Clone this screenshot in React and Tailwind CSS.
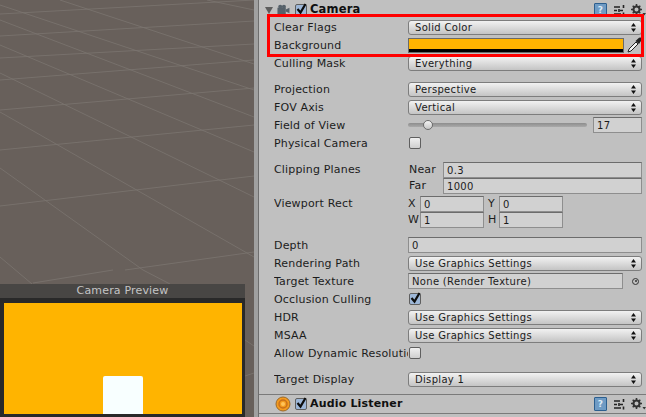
import React from "react";

const gridLines = [
  [0, 36, 254, 21], [0, 14, 254, 0], [0, 58, 254, 44], [0, 80, 254, 60], [0, 110, 254, 88], [0, 150, 254, 125], [0, 206, 254, 176],
  [125, 270, 254, 252], [33, 283, 113, 270], [245, 376, 254, 373],
  [0, 168, 143, 270], [143, 270, 170, 284], [0, 112, 254, 257], [0, 73, 254, 197], [0, 45, 254, 152], [0, 20, 254, 117],
  [0, 5, 254, 90], [60, 0, 254, 64], [207, 0, 254, 10], [0, 257, 32, 284], [245, 340, 254, 346],
];

const Label = ({ children, className = "pt-[2px]" }) => (
  <span className={`w-[134px] shrink-0 overflow-hidden whitespace-nowrap ${className}`}>{children}</span>
);

const Row = ({ label, children, className = "" }) => (
  <div className={`flex h-[18px] items-center ${className}`}>
    <Label>{label}</Label>
    {children}
  </div>
);

const Arrows = () => (
  <svg width="5" height="9" viewBox="0 0 5 9" className="shrink-0">
    <path d="M2.5 0L5 3.4H0zM2.5 9L0 5.6H5z" fill="#111" />
  </svg>
);

const Dropdown = ({ value }) => (
  <div className="flex h-[15px] w-[234px] items-center justify-between rounded-[3px] border border-[#7d7d7d] bg-gradient-to-b from-[#f2f2f2] to-[#c4c4c4] pl-[6px] pr-[5px] text-[#1a1a1a]">
    <span className="text-[10px] tracking-[0.32px]">{value}</span>
    <Arrows />
  </div>
);

const Field = ({ value, className = "" }) => (
  <div className={`flex h-[16px] items-center border border-[#8e8e8e] border-t-[#6c6c6c] bg-[#d1d1d1] pl-[3px] text-[10px] tracking-[0.32px] ${className}`}>
    {value}
  </div>
);

const Check = ({ checked }) => (
  <div className={`relative size-[12px] rounded-[2px] border border-[#5f5f5f] ${checked ? "bg-[#9db7d8]" : "bg-gradient-to-b from-[#f0f0f0] to-[#cfcfcf]"}`}>
    {checked && (
      <svg width="13" height="13" viewBox="0 0 13 13" className="absolute left-[-1px] top-[-3px]">
        <path d="M2.5 7L5.5 10.5L10.5 2" fill="none" stroke="#0c0c0c" strokeWidth="2.2" />
      </svg>
    )}
  </div>
);

const HeaderIcons = () => (
  <div className="ml-auto flex items-center">
    <div className="flex h-[14px] w-[13px] items-center justify-center rounded-[1px] border border-[#2c5f8f] bg-[#6f9bc4] text-[9px] font-bold leading-none text-[#dcebf6]">
      ?
    </div>
    <svg width="11" height="11" viewBox="0 0 11 11" className="ml-[7px]">
      <path d="M0 2H6M0 5.5H3M6 5.5H9M0 9H7" stroke="#222" strokeWidth="1.4" />
      <path d="M9.5 0V3M5 4V7M9.5 7.5V10.5" stroke="#222" strokeWidth="1.6" />
    </svg>
    <svg width="15" height="12" viewBox="0 0 15 12" className="ml-[6px]">
      <circle cx="5.5" cy="5.5" r="3" fill="none" stroke="#333" strokeWidth="2" />
      <path d="M5.5 0V2M5.5 9V11M0 5.5H2M9 5.5H11M1.7 1.7L3 3M8 8L9.3 9.3M1.7 9.3L3 8M8 3L9.3 1.7" stroke="#333" strokeWidth="1.6" />
      <path d="M11.5 9H15L13.2 11.5z" fill="#333" />
    </svg>
  </div>
);

const Eyedropper = () => (
  <svg width="15" height="16" viewBox="0 0 15 16" className="ml-[3px]">
    <path d="M1 15L2 12L9 5L11 7L4 14z" fill="#f4f4f4" stroke="#222" strokeWidth="1" />
    <path d="M8.5 4L12 0.8Q14 0 14.8 1.5Q15 3 14 4L12 7z" fill="#222" />
  </svg>
);

const App = () => {
  return (
    <div className="flex h-[417px] w-[646px] overflow-hidden bg-[#c0c0c0] font-['DejaVu_Sans',sans-serif] text-[11px] tracking-[0.17px] text-[#1c1c1c]">
      <div className="relative h-full w-[254px] shrink-0 bg-[#68605b]">
        <svg width="254" height="417" className="block">
          {gridLines.map(([x1, y1, x2, y2], i) => (
            <line key={i} x1={x1} y1={y1} x2={x2} y2={y2} stroke="#7b7570" strokeWidth="0.8" />
          ))}
        </svg>
        <div className="absolute bottom-0 left-0 flex h-[133px] w-[245px] flex-col bg-[#292929]">
          <div className="flex h-[14px] items-center justify-center bg-[#484644] text-[#c4c4c4]">Camera Preview</div>
          <div className="mb-[3px] ml-[4px] mr-[3px] mt-[5px] flex flex-1 items-end justify-center bg-[#ffb400]">
            <div className="h-[38px] w-[40px] rounded-t-[2px] bg-[#f8ffff]" />
          </div>
        </div>
      </div>
      <div className="w-[4px] shrink-0 bg-[#a0a0a0]" />
      <div className="w-px shrink-0 bg-[#6e6e6e]" />

      <div className="relative min-w-0 flex-1">
        <div className="flex h-[18px] items-center pl-[6px] pt-[2px]">
          <svg width="8" height="7" viewBox="0 0 8 7">
            <path d="M0 0H8L4 7z" fill="#5e5e5e" />
          </svg>
          <svg width="14" height="12" viewBox="0 0 14 13" className="ml-[3px]">
            <rect x="1" y="4" width="9" height="7" fill="#56616a" />
            <path d="M10 6L14 4V10L10 8z" fill="#56616a" />
            <circle cx="4" cy="3" r="2.2" fill="#56616a" />
            <circle cx="8" cy="3" r="2.2" fill="#56616a" />
          </svg>
          <div className="ml-[5px]"><Check checked /></div>
          <span className="ml-[3px] text-[11.5px] font-bold text-[#101010]">Camera</span>
          <HeaderIcons />
        </div>

        <div className="pl-[15px] pr-[4px]">
          <Row label="Clear Flags"><Dropdown value="Solid Color" /></Row>
          <Row label="Background">
            <div className="flex h-[15px] w-[216px] flex-col border border-[#6a6a6a]">
              <div className="flex-1 bg-[#ffb400]" />
              <div className="h-[3px] bg-black" />
            </div>
            <Eyedropper />
          </Row>
          <Row label="Culling Mask"><Dropdown value="Everything" /></Row>

          <Row label="Projection" className="mt-[8px]"><Dropdown value="Perspective" /></Row>
          <Row label="FOV Axis"><Dropdown value="Vertical" /></Row>
          <Row label="Field of View">
            <div className="relative flex w-[179px] items-center">
              <div className="h-[4px] w-full rounded-full bg-gradient-to-b from-[#8d8d8d] to-[#a9a9a9]" />
              <div className="absolute left-[15px] size-[10px] rounded-full border border-[#6d6d6d] bg-gradient-to-b from-[#f4f4f4] to-[#c6c6c6]" />
            </div>
            <Field value="17" className="ml-[6px] w-[49px]" />
          </Row>
          <Row label="Physical Camera"><div className="ml-[1px]"><Check /></div></Row>

          <div className="mt-[8px] flex h-[34px] pt-[2px]">
            <Label className="pt-0">Clipping Planes</Label>
            <div className="flex flex-1 flex-col">
              <div className="flex h-[16px] items-center">
                <span className="w-[35px] pl-[1px] pt-[1px]">Near</span>
                <Field value="0.3" className="flex-1" />
              </div>
              <div className="flex h-[16px] items-center">
                <span className="w-[35px] pl-[1px] pt-[1px]">Far</span>
                <Field value="1000" className="flex-1" />
              </div>
            </div>
          </div>

          <div className="flex h-[34px] pt-[2px]">
            <Label className="pt-0">Viewport Rect</Label>
            <div className="flex flex-col">
              {[["X", "0", "Y", "0"], ["W", "1", "H", "1"]].map(([a, av, b, bv]) => (
                <div key={a} className="flex h-[16px] items-center">
                  <span className="w-[12px] pt-[1px]">{a}</span>
                  <Field value={av} className="w-[64px]" />
                  <span className="w-[15px] pl-[4px] pt-[1px]">{b}</span>
                  <Field value={bv} className="w-[64px]" />
                </div>
              ))}
            </div>
          </div>

          <Row label="Depth" className="mt-[8px]"><Field value="0" className="w-[234px]" /></Row>
          <Row label="Rendering Path"><Dropdown value="Use Graphics Settings" /></Row>
          <Row label="Target Texture">
            <Field value="None (Render Texture)" className="w-[215px]" />
            <div className="ml-[9px] flex size-[7px] items-center justify-center rounded-full border border-[#333]">
              <div className="size-[2px] rounded-full bg-[#333]" />
            </div>
          </Row>
          <Row label="Occlusion Culling"><div className="ml-[1px]"><Check checked /></div></Row>
          <Row label="HDR"><Dropdown value="Use Graphics Settings" /></Row>
          <Row label="MSAA"><Dropdown value="Use Graphics Settings" /></Row>
          <Row label="Allow Dynamic Resolution"><div className="ml-[1px]"><Check /></div></Row>
          <Row label="Target Display" className="mt-[8px]"><Dropdown value="Display 1" /></Row>
        </div>

        <div className="mt-[6px] flex h-[20px] items-center border-y border-y-[#7a7a7a] pl-[16px]">
          <svg width="16" height="16" viewBox="0 0 16 16">
            <circle cx="8" cy="8" r="7" fill="#f39a1e" stroke="#9b6a2a" />
            <circle cx="8" cy="8" r="4" fill="none" stroke="#c9701a" strokeWidth="1.5" />
            <circle cx="8" cy="8" r="2" fill="#ffc35a" />
          </svg>
          <div className="ml-[4px]"><Check checked /></div>
          <span className="ml-[3px] font-bold text-[#101010]">Audio Listener</span>
          <HeaderIcons />
        </div>

        {/* red highlight drawn over the first two rows */}
        <div className="absolute left-[8px] top-[14px] h-[43px] w-[377px] border-[3px] border-[#ff0000]" />
      </div>
    </div>
  );
};

export default App;
